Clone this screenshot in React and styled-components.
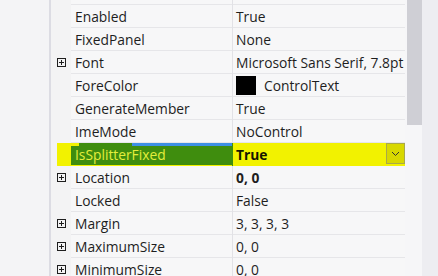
import React from 'react';
import styled, { createGlobalStyle } from 'styled-components';

const GlobalStyle = createGlobalStyle`
  html, body {
    margin: 0;
    padding: 0;
    background: #f4f4f6;
    overflow: hidden;
  }
  #root {
    height: 276px;
  }
`;

const Page = styled.div`
  display: flex;
  height: 276px;
  overflow: hidden;
  font-family: 'Open Sans', 'Noto Sans', sans-serif;
  font-size: 13.8px;
  color: #1e1e1e;
`;

const LeftPane = styled.div`
  width: 49px;
  flex: none;
  background: #f4f4f6;
  border-right: 2px solid #dcdce3;
`;

const Grid = styled.div`
  width: 354px;
  flex: none;
  background: #f3f3f4;
  display: flex;
  flex-direction: column;
`;

const Row = styled.div`
  display: grid;
  grid-template-columns: 20px 161px 1px 172px;
  height: ${(p) => p.h || 23}px;
  flex: none;
`;

const Gutter = styled.div`
  position: relative;
  display: flex;
  align-items: center;
  padding-left: 6px;
  background: #f3f3f4;
`;

const Marker = styled.div`
  position: absolute;
  left: 6px;
  right: 0;
  top: 0;
  bottom: -2px;
  background: #f2f200;
  border-radius: 0 0 2px 3px;
`;

const Expander = styled.div`
  position: relative;
  width: 9px;
  height: 9px;
  box-sizing: border-box;
  border: 1px solid #1e1e1e;
  &::before, &::after {
    content: '';
    position: absolute;
    background: #1e1e1e;
  }
  &::before { left: 1px; right: 1px; top: 3px; height: 1px; }
  &::after { top: 1px; bottom: 1px; left: 3px; width: 1px; }
`;

const Cell = styled.div`
  display: flex;
  align-items: center;
  gap: 8px;
  white-space: nowrap;
  overflow: hidden;
  padding-left: ${(p) => (p.value ? 3 : 4)}px;
  background: #f7f7f8;
  border-bottom: 1px solid #e6e6e9;
  font-weight: ${(p) => (p.bold ? 700 : 400)};
`;

const NameSelected = styled(Cell)`
  color: #e4ee3c;
  border-bottom-color: #f2f200;
  background:
    linear-gradient(to right, #f2f200 0, #f2f200 5%, transparent 5%, transparent 38%, #3d8fe4 38%) top / 100% 3px no-repeat,
    #3f8d0e;
`;

const ValueSelected = styled(Cell)`
  position: relative;
  background: #f2f200;
  border-bottom-color: #f2f200;
  color: #151500;
`;

const Divider = styled.div`
  background: #e2e2e6;
`;

const DropButton = styled.div`
  position: absolute;
  right: 0;
  top: 0;
  width: 19px;
  height: 21px;
  box-sizing: border-box;
  background: #d8d800;
  border: 1px solid #a9a94a;
  display: flex;
  align-items: center;
  justify-content: center;
`;

const Swatch = styled.div`
  width: 20px;
  height: 19px;
  background: #000;
  flex: none;
`;

const Scroll = styled.div`
  width: 17px;
  flex: none;
  background: #f6f6f8;
  padding-left: 2px;
  box-sizing: border-box;
`;

const Thumb = styled.div`
  width: 15px;
  height: 125px;
  background: #cfcfd5;
`;

const RightPane = styled.div`
  flex: 1;
  background: #ededf1;
`;

const rows = [
  { name: 'Enabled', value: 'True' },
  { name: 'FixedPanel', value: 'None' },
  { name: 'Font', value: 'Microsoft Sans Serif, 7.8pt', expand: true },
  { name: 'ForeColor', value: 'ControlText', swatch: true },
  { name: 'GenerateMember', value: 'True' },
  { name: 'ImeMode', value: 'NoControl' },
  { name: 'IsSplitterFixed', value: 'True', selected: true },
  { name: 'Location', value: '0, 0', expand: true, bold: true },
  { name: 'Locked', value: 'False' },
  { name: 'Margin', value: '3, 3, 3, 3', expand: true },
  { name: 'MaximumSize', value: '0, 0', expand: true },
  { name: 'MinimumSize', value: '0, 0', expand: true },
];

function PropRow({ row }) {
  if (row.selected) {
    return (
      <Row>
        <Gutter>
          <Marker />
        </Gutter>
        <NameSelected>{row.name}</NameSelected>
        <Divider style={{ background: '#3f8d0e' }} />
        <ValueSelected value bold>
          {row.value}
          <DropButton>
            <svg width="9" height="6" viewBox="0 0 9 6">
              <path d="M1 1 L4.5 4.5 L8 1" fill="none" stroke="#333" strokeWidth="1" />
            </svg>
          </DropButton>
        </ValueSelected>
      </Row>
    );
  }
  return (
    <Row>
      <Gutter>{row.expand && <Expander />}</Gutter>
      <Cell>{row.name}</Cell>
      <Divider />
      <Cell value bold={row.bold}>
        {row.swatch && <Swatch />}
        {row.value}
      </Cell>
    </Row>
  );
}

export default function App() {
  return (
    <Page>
      <GlobalStyle />
      <LeftPane />
      <Grid>
        <Row h={5}>
          <Gutter />
          <Cell />
          <Divider />
          <Cell value />
        </Row>
        {rows.map((r) => (
          <PropRow key={r.name} row={r} />
        ))}
      </Grid>
      <Scroll>
        <Thumb />
      </Scroll>
      <RightPane />
    </Page>
  );
}
